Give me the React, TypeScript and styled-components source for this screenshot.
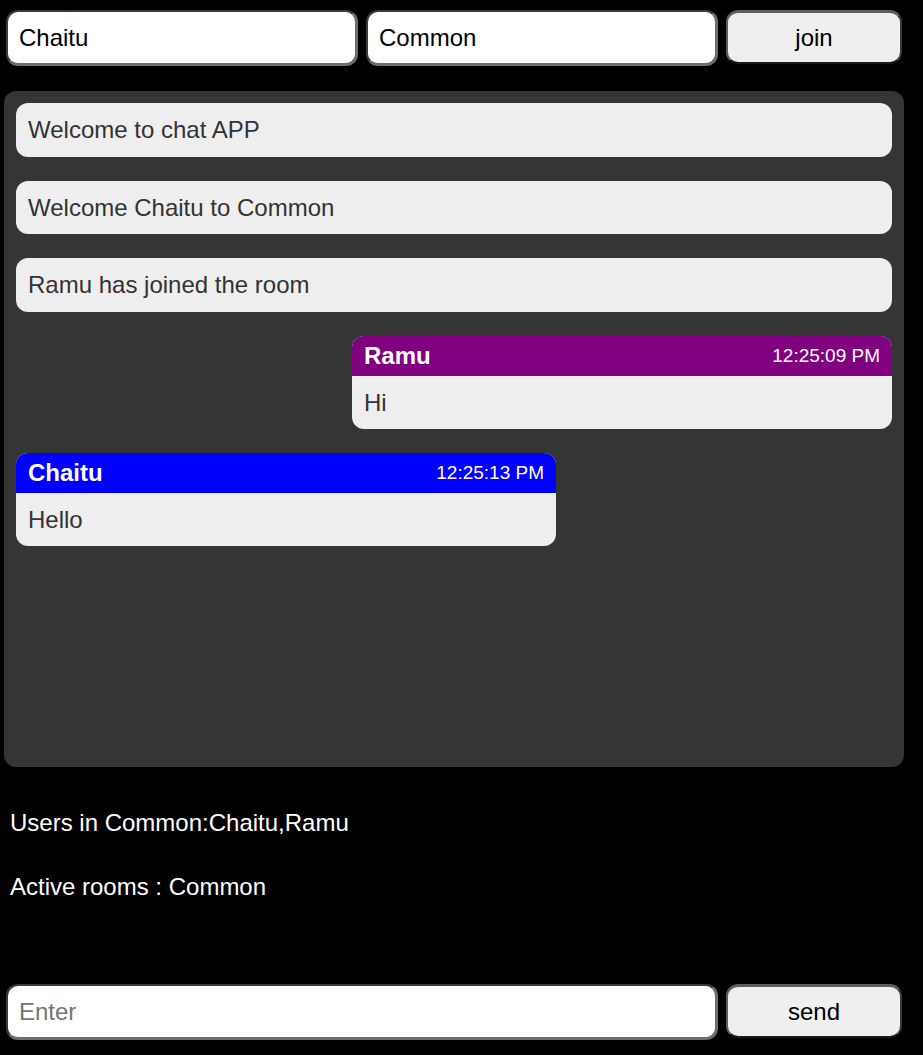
import React from "react";
import styled, { createGlobalStyle } from "styled-components";

const Global = createGlobalStyle`
  html, body { margin: 0; padding: 0; background: #000; }
  body { font-family: "Liberation Sans", Arial, sans-serif; }
  * { box-sizing: border-box; }
`;

const Page = styled.div`
  width: 923px;
  min-height: 1055px;
  background: #000;
  padding-top: 10px;
`;

const Bar = styled.div`
  display: flex;
  align-items: flex-start;
  padding-left: 6px;
  gap: 8px;
`;

const Field = styled.input<{ $w: number }>`
  width: ${(p) => p.$w}px;
  height: 56px;
  border-style: solid;
  border-width: 2px 3px 3px 2px;
  border-top-color: #3a3a3a;
  border-left-color: #3a3a3a;
  border-bottom-color: #6e6e6e;
  border-right-color: #6e6e6e;
  border-radius: 12px;
  background: #fff;
  font-family: "Liberation Sans", Arial, sans-serif;
  font-size: 24px;
  color: #000;
  padding: 0 11px;
  outline: none;
  &::placeholder { color: #757575; }
`;

const Btn = styled.button`
  width: 176px;
  height: 54px;
  border-style: solid;
  border-width: 3px 2px 2px 2px;
  border-top-color: #5e5e5e;
  border-left-color: #5e5e5e;
  border-bottom-color: #1a1a1a;
  border-right-color: #3a3a3a;
  border-radius: 12px;
  background: #efefef;
  font-family: "Liberation Sans", Arial, sans-serif;
  font-size: 24px;
  color: #000;
  cursor: pointer;
`;

const ChatBox = styled.div`
  margin: 25px 0 0 4px;
  width: 900px;
  height: 676px;
  background: #353535;
  border-radius: 12px;
  padding: 12px 12px;
  display: flex;
  flex-direction: column;
  gap: 24px;
`;

const Notice = styled.div`
  background: #eee;
  color: #333;
  border-radius: 12px;
  font-size: 24px;
  line-height: 29.6px;
  padding: 12px 12px;
`;

const Bubble = styled.div<{ $right?: boolean }>`
  width: 540px;
  align-self: ${(p) => (p.$right ? "flex-end" : "flex-start")};
  background: #eee;
  border-radius: 12px;
  overflow: hidden;
`;

const BubbleHead = styled.div<{ $color: string }>`
  background: ${(p) => p.$color};
  color: #fff;
  height: 40px;
  display: flex;
  align-items: center;
  justify-content: space-between;
  padding: 0 12px;
`;

const Name = styled.span`
  font-weight: bold;
  font-size: 24px;
`;

const Time = styled.span`
  font-size: 19px;
`;

const BubbleBody = styled.div`
  color: #333;
  font-size: 24px;
  line-height: 29px;
  padding: 12px 12px 12px;
`;

const Info = styled.p<{ $top: number }>`
  margin: ${(p) => p.$top}px 0 0 10px;
  color: #fff;
  font-size: 24px;
  line-height: 28px;
`;

const Footer = styled(Bar)`
  margin-top: 83px;
`;

export default function App() {
  return (
    <>
      <Global />
      <Page>
        <Bar>
          <Field $w={352} defaultValue="Chaitu" />
          <Field $w={352} defaultValue="Common" />
          <Btn>join</Btn>
        </Bar>
        <ChatBox>
          <Notice>Welcome to chat APP</Notice>
          <Notice>Welcome Chaitu to Common</Notice>
          <Notice>Ramu has joined the room</Notice>
          <Bubble $right>
            <BubbleHead $color="#800080">
              <Name>Ramu</Name>
              <Time>12:25:09 PM</Time>
            </BubbleHead>
            <BubbleBody>Hi</BubbleBody>
          </Bubble>
          <Bubble>
            <BubbleHead $color="#0000ff">
              <Name>Chaitu</Name>
              <Time>12:25:13 PM</Time>
            </BubbleHead>
            <BubbleBody>Hello</BubbleBody>
          </Bubble>
        </ChatBox>
        <Info $top={42}>Users in Common:Chaitu,Ramu</Info>
        <Info $top={36}>Active rooms : Common</Info>
        <Footer>
          <Field $w={712} placeholder="Enter" />
          <Btn>send</Btn>
        </Footer>
      </Page>
    </>
  );
}
